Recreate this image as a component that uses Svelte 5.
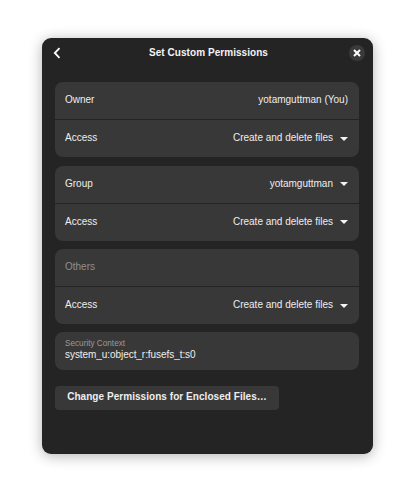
<script>
  const groups = [
    { label: 'Owner', value: 'yotamguttman (You)', menu: false, dim: false },
    { label: 'Group', value: 'yotamguttman', menu: true, dim: false },
    { label: 'Others', value: '', menu: false, dim: true }
  ];
</script>

<div class="page">
  <div class="dialog">
    <header class="titlebar">
      <button class="back" aria-label="Back">
        <svg width="10" height="12" viewBox="0 0 10 12">
          <path d="M7.5 1.2 L2.8 6 L7.5 10.8" fill="none" stroke="#fff" stroke-width="1.8" />
        </svg>
      </button>
      <h1>Set Custom Permissions</h1>
      <button class="close" aria-label="Close">
        <svg width="8" height="8" viewBox="0 0 8 8">
          <path d="M1 1 L7 7 M7 1 L1 7" fill="none" stroke="#fff" stroke-width="2" />
        </svg>
      </button>
    </header>

    <div class="content">
      {#each groups as group}
        <section class="card">
          <div class="row">
            <span class:dim={group.dim}>{group.label}</span>
            <span class="value">
              {group.value}
              {#if group.menu}
                <svg class="caret" width="8" height="4" viewBox="0 0 8 4"><path d="M0 0 H8 L4 4 Z" fill="#f4f4f4" /></svg>
              {/if}
            </span>
          </div>
          <div class="row">
            <span>Access</span>
            <span class="value">
              Create and delete files
              <svg class="caret" width="8" height="4" viewBox="0 0 8 4"><path d="M0 0 H8 L4 4 Z" fill="#f4f4f4" /></svg>
            </span>
          </div>
        </section>
      {/each}

      <section class="card context">
        <span class="caption">Security Context</span>
        <span class="path">system_u:object_r:fusefs_t:s0</span>
      </section>

      <button class="enclosed">Change Permissions for Enclosed Files…</button>
    </div>
  </div>
</div>

<style>
  :global(body) {
    background: #fff;
  }

  .page {
    width: 415px;
    height: 500px;
    padding: 38px 42px 46px;
    box-sizing: border-box;
    font-family: "Liberation Sans", Arial, sans-serif;
    font-size: 10px;
    color: #eeeeee;
  }

  .dialog {
    height: 416px;
    background: #242424;
    border-radius: 9px;
    box-shadow: 0 2px 14px rgba(0, 0, 0, 0.3);
  }

  .titlebar {
    display: flex;
    align-items: center;
    justify-content: space-between;
    height: 29px;
    padding: 0 8px 0 10px;
  }

  .titlebar h1 {
    flex: 1;
    margin: 0 0 1px;
    padding-left: 6px;
    text-align: center;
    font-size: 10px;
    font-weight: 700;
    letter-spacing: 0.05px;
    color: #f4f4f4;
  }

  button {
    border: none;
    padding: 0;
    font: inherit;
    color: inherit;
  }

  .back {
    display: flex;
    margin-top: 1px;
    background: none;
  }

  .close {
    display: flex;
    align-items: center;
    justify-content: center;
    width: 16px;
    height: 16px;
    margin-top: 1px;
    border-radius: 50%;
    background: #3a3a3a;
  }

  .content {
    display: flex;
    flex-direction: column;
    align-items: stretch;
    gap: 8.5px;
    padding: 15px 14px 0 13px;
  }

  .card {
    background: #383838;
    border-radius: 8px;
  }

  .row {
    display: flex;
    align-items: center;
    justify-content: space-between;
    box-sizing: border-box;
    height: 37px;
    padding: 0 11px 2px 10px;
  }

  .row + .row {
    height: 38px;
    border-top: 1px solid #242424;
  }

  .dim {
    color: #8f8f8f;
  }

  .value {
    display: flex;
    align-items: center;
    gap: 7px;
  }

  .caret {
    margin-top: 2px;
  }

  .context {
    display: flex;
    flex-direction: column;
    height: 38px;
    margin-top: -0.6px;
    padding: 6.6px 10px 0;
    box-sizing: border-box;
    line-height: 12px;
  }

  .caption {
    font-size: 8.2px;
    line-height: 10px;
    color: #9a9a9a;
  }

  .path {
    letter-spacing: -0.06px;
  }

  .enclosed {
    align-self: flex-start;
    width: 224px;
    height: 24px;
    margin-top: 7.6px;
    padding-bottom: 3px;
    background: #383838;
    border-radius: 4px;
    font-weight: 700;
    letter-spacing: 0.05px;
  }
</style>
